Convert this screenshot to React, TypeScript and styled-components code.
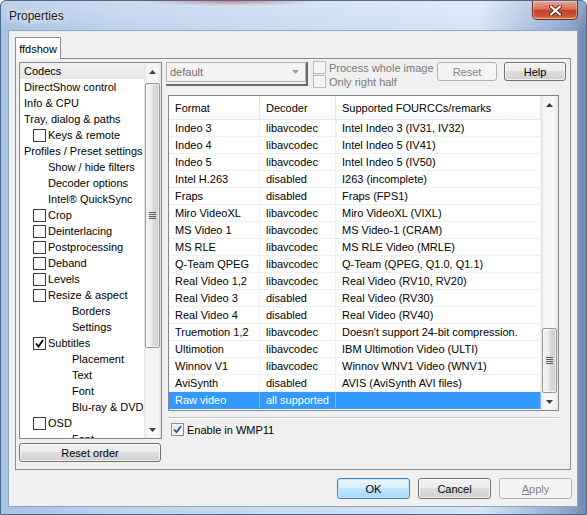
import React from 'react';
import styled, { createGlobalStyle, css } from 'styled-components';

const GlobalStyle = createGlobalStyle`
  html, body { margin: 0; padding: 0; }
  body {
    width: 587px;
    height: 515px;
    overflow: hidden;
    background: #ffffff;
    font-family: "Liberation Sans", Arial, sans-serif;
    font-size: 11px;
    color: #000;
  }
  * { box-sizing: border-box; }
`;

const Window = styled.div`
  width: 587px;
  height: 515px;
  display: flex;
  flex-direction: column;
  padding: 0 8px 7px 7px;
  border: 1px solid #4f6a8c;
  border-radius: 6px 6px 0 0;
  background:
    radial-gradient(ellipse 90px 5px at 230px 0, rgba(196, 70, 84, 0.6), transparent),
    linear-gradient(180deg, rgba(255, 255, 255, 0.25), rgba(255, 255, 255, 0) 30px),
    linear-gradient(90deg, #a8c2e2 0%, #bcd2ec 20%, #c8dcf2 50%, #d4e4f6 82%, #8aa6cb 97%, #6f89ad 100%);
`;

const TitleBar = styled.div`
  height: 29px;
  display: flex;
  justify-content: space-between;
  align-items: flex-start;
`;

const Title = styled.div`
  padding: 8px 0 0 1px;
  font-size: 12px;
  color: #1b1b1b;
  text-shadow: 0 0 6px #fff, 0 0 10px rgba(255, 255, 255, 0.8);
`;

const CloseButton = styled.div`
  width: 46px;
  height: 19px;
  display: flex;
  align-items: center;
  justify-content: center;
  border: 1px solid #6b2a1f;
  border-top: none;
  border-radius: 0 0 5px 5px;
  background: linear-gradient(180deg, #e8a592 0%, #d8735c 45%, #c5432a 52%, #cd5636 85%, #e08d6d 100%);
  box-shadow: inset 0 0 0 1px rgba(255, 255, 255, 0.35);
`;

const Client = styled.div`
  flex: 1;
  display: flex;
  flex-direction: column;
  padding: 6px 6px 7px 6px;
  background: #f0f0f0;
  border: 1px solid #8ea6c4;
`;

const TabStrip = styled.div`
  display: flex;
  height: 21px;
`;

const Tab = styled.div`
  height: 22px;
  width: 46px;
  display: flex;
  align-items: center;
  justify-content: center;
  background: #ffffff;
  border: 1px solid #898c95;
  border-bottom: none;
  position: relative;
  z-index: 1;
`;

const TabPage = styled.div`
  height: 412px;
  border: 1px solid #898c95;
  background: #f0f0f0;
  display: flex;
  gap: 4px;
  padding: 3px 0 0 3px;
`;

const LeftColumn = styled.div`
  width: 143px;
  display: flex;
  flex-direction: column;
  gap: 4px;
`;

const Tree = styled.div`
  height: 377px;
  display: flex;
  border: 1px solid #828790;
  background: #ffffff;
  overflow: hidden;
`;

const TreeList = styled.div`
  flex: 1;
  overflow: hidden;
`;

const TreeRow = styled.div<{ $pad: number; $hot?: boolean }>`
  height: 16px;
  display: flex;
  align-items: center;
  gap: 2px;
  padding-left: ${p => p.$pad}px;
  white-space: nowrap;
  background: ${p => (p.$hot ? 'linear-gradient(180deg, #f2f2f2, #e6e6e6)' : 'transparent')};
`;

const TreeCheck = styled.span`
  width: 13px;
  height: 13px;
  flex-shrink: 0;
  border: 1px solid #3a3a3a;
  background: #ffffff;
  display: flex;
  align-items: center;
  justify-content: center;
`;

const ScrollBar = styled.div`
  width: 17px;
  flex-shrink: 0;
  display: flex;
  flex-direction: column;
  background: linear-gradient(90deg, #e4e4e4 0%, #f5f5f5 18%, #f5f5f5 82%, #e4e4e4 100%);
`;

const ArrowButton = styled.div`
  height: 17px;
  flex-shrink: 0;
  display: flex;
  align-items: center;
  justify-content: center;
`;

const Track = styled.div`
  flex: 1;
  display: flex;
  flex-direction: column;
  padding: 0 1px;
`;

const Thumb = styled.div<{ $top: number; $height: number }>`
  margin-top: ${p => p.$top}px;
  height: ${p => p.$height}px;
  border: 1px solid #979797;
  border-radius: 2px;
  background: linear-gradient(90deg, #f3f3f3 0%, #ebebeb 45%, #d9d9d9 55%, #cfcfcf 100%);
  box-shadow: inset 0 0 0 1px rgba(255, 255, 255, 0.6);
  display: flex;
  align-items: center;
  justify-content: center;
`;

const Button = styled.button<{ $w: number; $h?: number; $default?: boolean }>`
  width: ${p => p.$w}px;
  height: ${p => p.$h ?? 21}px;
  flex-shrink: 0;
  padding: 0;
  font-family: inherit;
  font-size: 11px;
  color: #000;
  border: 1px solid #707070;
  border-radius: 3px;
  background: linear-gradient(180deg, #f2f2f2 0%, #ebebeb 49%, #dddddd 50%, #cfcfcf 100%);
  box-shadow: inset 0 0 0 1px rgba(255, 255, 255, 0.7);
  &:disabled {
    border-color: #adb2b5;
    background: #f4f4f4;
    color: #838383;
    box-shadow: none;
  }
  ${p =>
    p.$default &&
    css`
      border-color: #3c7fb1;
      background: linear-gradient(180deg, #eaf6fd 0%, #d9f0fc 49%, #bee6fd 50%, #a7d9f5 100%);
      box-shadow: inset 0 0 0 1px #c9e8fb;
    `}
`;

const RightColumn = styled.div`
  width: 400px;
  display: flex;
  flex-direction: column;
`;

const TopRow = styled.div`
  height: 25px;
  display: flex;
  align-items: flex-start;
`;

const ComboFrame = styled.div`
  border-right: 2px solid #6a6a6a;
  border-bottom: 2px solid #6a6a6a;
  padding-bottom: 2px;
`;

const Combo = styled.div`
  width: 140px;
  height: 20px;
  display: flex;
  align-items: center;
  justify-content: space-between;
  padding: 0 6px 0 3px;
  border: 1px solid #b4b4b4;
  background: #f4f4f4;
  color: #6d6d6d;
`;

const OptionGroup = styled.div`
  margin: -1px 0 0 5px;
  display: flex;
  flex-direction: column;
  gap: 1px;
`;

const OptionRow = styled.label<{ $disabled?: boolean }>`
  height: 13px;
  display: flex;
  align-items: center;
  gap: 3px;
  color: ${p => (p.$disabled ? '#7a7a7a' : '#000')};
  white-space: nowrap;
`;

const Check = styled.span<{ $disabled?: boolean }>`
  width: 13px;
  height: 13px;
  flex-shrink: 0;
  display: flex;
  align-items: center;
  justify-content: center;
  border: 1px solid ${p => (p.$disabled ? '#b8b8b8' : '#8e8f8f')};
  background: ${p =>
    p.$disabled ? '#f4f4f4' : 'linear-gradient(135deg, #dcdcdc 0%, #f7f7f7 60%, #ffffff 100%)'};
  box-shadow: inset 0 0 0 1px ${p => (p.$disabled ? '#f8f8f8' : '#f4f4f4')};
`;

const ButtonGroup = styled.div`
  margin-left: auto;
  display: flex;
  gap: 7px;
`;

const ListBox = styled.div`
  margin: 8px 7px 0 2px;
  height: 316px;
  display: flex;
  border: 1px solid #828790;
  background: #ffffff;
`;

const Table = styled.div`
  flex: 1;
  display: flex;
  flex-direction: column;
  overflow: hidden;
`;

const Grid = styled.div`
  display: grid;
  grid-template-columns: 91px 76px 1fr;
`;

const HeaderCell = styled.div`
  height: 24px;
  display: flex;
  align-items: center;
  padding-left: 6px;
  border-right: 1px solid #e3e6ea;
  border-bottom: 1px solid #e8e8e8;
  background: linear-gradient(180deg, #ffffff 0%, #ffffff 60%, #f7f8fa 100%);
  white-space: nowrap;
`;

const Cell = styled.div<{ $selected?: boolean }>`
  height: 17px;
  display: flex;
  align-items: center;
  padding-left: 6px;
  border-right: 1px solid ${p => (p.$selected ? '#7fbaf7' : '#f0f0f0')};
  border-bottom: 1px solid ${p => (p.$selected ? '#3399ff' : '#f0f0f0')};
  background: ${p => (p.$selected ? '#3399ff' : 'transparent')};
  color: ${p => (p.$selected ? '#ffffff' : '#000')};
  white-space: nowrap;
  overflow: hidden;
`;

const Separator = styled.div`
  margin: 6px 7px 0 2px;
  border-top: 1px solid #c7c7c7;
  border-bottom: 1px solid #ffffff;
`;

const EnableRow = styled.label`
  margin: 4px 0 0 5px;
  height: 13px;
  display: flex;
  align-items: center;
  gap: 3px;
`;

const Footer = styled.div`
  margin-top: 8px;
  margin-right: -1px;
  display: flex;
  justify-content: flex-end;
  gap: 8px;
`;

const UpArrow = () => (
  <svg width="7" height="4" viewBox="0 0 7 4">
    <path d="M0 4 L3.5 0 L7 4 Z" fill="#3f3f3f" />
  </svg>
);

const DownArrow = () => (
  <svg width="7" height="4" viewBox="0 0 7 4">
    <path d="M0 0 L3.5 4 L7 0 Z" fill="#3f3f3f" />
  </svg>
);

const Grip = () => (
  <svg width="7" height="8" viewBox="0 0 7 8">
    {[0.5, 2.5, 4.5, 6.5].map(y => (
      <line key={y} x1="0" y1={y} x2="7" y2={y} stroke="#585858" strokeWidth="1" />
    ))}
  </svg>
);

const VScroll = ({ top, height }: { top: number; height: number }) => (
  <ScrollBar>
    <ArrowButton>
      <UpArrow />
    </ArrowButton>
    <Track>
      <Thumb $top={top} $height={height}>
        <Grip />
      </Thumb>
    </Track>
    <ArrowButton>
      <DownArrow />
    </ArrowButton>
  </ScrollBar>
);

type TreeItem = { label: string; pad: number; check?: boolean };

const treeItems: TreeItem[] = [
  { label: 'Codecs', pad: 4 },
  { label: 'DirectShow control', pad: 4 },
  { label: 'Info & CPU', pad: 4 },
  { label: 'Tray, dialog & paths', pad: 4 },
  { label: 'Keys & remote', pad: 13, check: false },
  { label: 'Profiles / Preset settings', pad: 4 },
  { label: 'Show / hide filters', pad: 28 },
  { label: 'Decoder options', pad: 28 },
  { label: 'Intel® QuickSync', pad: 28 },
  { label: 'Crop', pad: 13, check: false },
  { label: 'Deinterlacing', pad: 13, check: false },
  { label: 'Postprocessing', pad: 13, check: false },
  { label: 'Deband', pad: 13, check: false },
  { label: 'Levels', pad: 13, check: false },
  { label: 'Resize & aspect', pad: 13, check: false },
  { label: 'Borders', pad: 52 },
  { label: 'Settings', pad: 52 },
  { label: 'Subtitles', pad: 13, check: true },
  { label: 'Placement', pad: 52 },
  { label: 'Text', pad: 52 },
  { label: 'Font', pad: 52 },
  { label: 'Blu-ray & DVD', pad: 52 },
  { label: 'OSD', pad: 13, check: false },
  { label: 'Font', pad: 52 },
];

const codecs: [string, string, string][] = [
  ['Indeo 3', 'libavcodec', 'Intel Indeo 3 (IV31, IV32)'],
  ['Indeo 4', 'libavcodec', 'Intel Indeo 5 (IV41)'],
  ['Indeo 5', 'libavcodec', 'Intel Indeo 5 (IV50)'],
  ['Intel H.263', 'disabled', 'I263 (incomplete)'],
  ['Fraps', 'disabled', 'Fraps (FPS1)'],
  ['Miro VideoXL', 'libavcodec', 'Miro VideoXL (VIXL)'],
  ['MS Video 1', 'libavcodec', 'MS Video-1 (CRAM)'],
  ['MS RLE', 'libavcodec', 'MS RLE Video (MRLE)'],
  ['Q-Team QPEG', 'libavcodec', 'Q-Team (QPEG, Q1.0, Q1.1)'],
  ['Real Video 1,2', 'libavcodec', 'Real Video (RV10, RV20)'],
  ['Real Video 3', 'disabled', 'Real Video (RV30)'],
  ['Real Video 4', 'disabled', 'Real Video (RV40)'],
  ['Truemotion 1,2', 'libavcodec', "Doesn't support 24-bit compression."],
  ['Ultimotion', 'libavcodec', 'IBM Ultimotion Video (ULTI)'],
  ['Winnov V1', 'libavcodec', 'Winnov WNV1 Video (WNV1)'],
  ['AviSynth', 'disabled', 'AVIS (AviSynth AVI files)'],
  ['Raw video', 'all supported', ''],
];

const BlackTick = () => (
  <svg width="9" height="9" viewBox="0 0 9 9">
    <path d="M1 4.5 L3.5 7.5 L8 1" fill="none" stroke="#000" strokeWidth="1.8" />
  </svg>
);

const BlueTick = () => (
  <svg width="9" height="9" viewBox="0 0 9 9">
    <path d="M1 4.5 L3.5 7.2 L8 1.2" fill="none" stroke="#2a4b8d" strokeWidth="1.8" />
  </svg>
);

export default function App() {
  return (
    <>
      <GlobalStyle />
      <Window>
        <TitleBar>
          <Title>Properties</Title>
          <CloseButton>
            <svg width="13" height="11" viewBox="0 0 13 11">
              <path d="M2 1.5 L11 9.5 M11 1.5 L2 9.5" stroke="#5a1f16" strokeWidth="4" strokeLinecap="round" />
              <path d="M2 1.5 L11 9.5 M11 1.5 L2 9.5" stroke="#ffffff" strokeWidth="2.2" strokeLinecap="round" />
            </svg>
          </CloseButton>
        </TitleBar>
        <Client>
          <TabStrip>
            <Tab>ffdshow</Tab>
          </TabStrip>
          <TabPage>
            <LeftColumn>
              <Tree>
                <TreeList>
                  {treeItems.map((item, i) => (
                    <TreeRow key={i} $pad={item.pad} $hot={i === 0}>
                      {item.check !== undefined && (
                        <TreeCheck>{item.check && <BlackTick />}</TreeCheck>
                      )}
                      <span>{item.label}</span>
                    </TreeRow>
                  ))}
                </TreeList>
                <VScroll top={3} height={265} />
              </Tree>
              <Button $w={142} $h={19}>
                Reset order
              </Button>
            </LeftColumn>
            <RightColumn>
              <TopRow>
                <ComboFrame>
                  <Combo>
                    <span>default</span>
                    <svg width="7" height="4" viewBox="0 0 7 4">
                      <path d="M0 0 L3.5 4 L7 0 Z" fill="#9a9a9a" />
                    </svg>
                  </Combo>
                </ComboFrame>
                <OptionGroup>
                  <OptionRow $disabled>
                    <Check $disabled />
                    Process whole image
                  </OptionRow>
                  <OptionRow $disabled>
                    <Check $disabled />
                    Only right half
                  </OptionRow>
                </OptionGroup>
                <ButtonGroup>
                  <Button $w={60} $h={19} disabled>
                    Reset
                  </Button>
                  <Button $w={62} $h={19}>
                    Help
                  </Button>
                </ButtonGroup>
              </TopRow>
              <ListBox>
                <Table>
                  <Grid>
                    <HeaderCell>Format</HeaderCell>
                    <HeaderCell>Decoder</HeaderCell>
                    <HeaderCell>Supported FOURCCs/remarks</HeaderCell>
                    {codecs.map((row, i) =>
                      row.map((text, j) => (
                        <Cell key={`${i}-${j}`} $selected={i === codecs.length - 1}>
                          {text}
                        </Cell>
                      ))
                    )}
                  </Grid>
                </Table>
                <VScroll top={215} height={65} />
              </ListBox>
              <Separator />
              <EnableRow>
                <Check>
                  <BlueTick />
                </Check>
                Enable in WMP11
              </EnableRow>
            </RightColumn>
          </TabPage>
          <Footer>
            <Button $w={73} $default>
              OK
            </Button>
            <Button $w={73}>Cancel</Button>
            <Button $w={73} disabled>
              <u>A</u>pply
            </Button>
          </Footer>
        </Client>
      </Window>
    </>
  );
}
